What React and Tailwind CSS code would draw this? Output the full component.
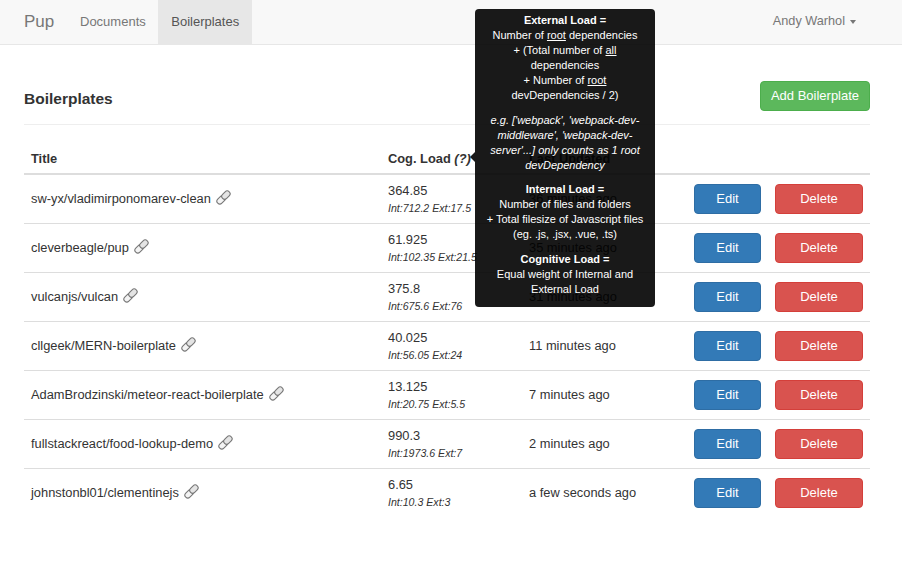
const rows = [
  { title: 'sw-yx/vladimirponomarev-clean', load: '364.85', detail: 'Int:712.2 Ext:17.5', updated: '36 minutes ago' },
  { title: 'cleverbeagle/pup', load: '61.925', detail: 'Int:102.35 Ext:21.5', updated: '35 minutes ago' },
  { title: 'vulcanjs/vulcan', load: '375.8', detail: 'Int:675.6 Ext:76', updated: '31 minutes ago' },
  { title: 'cllgeek/MERN-boilerplate', load: '40.025', detail: 'Int:56.05 Ext:24', updated: '11 minutes ago' },
  { title: 'AdamBrodzinski/meteor-react-boilerplate', load: '13.125', detail: 'Int:20.75 Ext:5.5', updated: '7 minutes ago' },
  { title: 'fullstackreact/food-lookup-demo', load: '990.3', detail: 'Int:1973.6 Ext:7', updated: '2 minutes ago' },
  { title: 'johnstonbl01/clementinejs', load: '6.65', detail: 'Int:10.3 Ext:3', updated: 'a few seconds ago' },
];

function LinkIcon() {
  return (
    <svg width="17" height="17" viewBox="0 0 17 17" fill="none" className="ml-[4px] inline-block align-[-3px]">
      <g transform="rotate(-45 8.5 8.5)" stroke="#777" strokeWidth="1.1">
        <rect x="0.4" y="5.6" width="9.4" height="5.8" rx="2.9" fill="#f4f4f4" />
        <rect x="7.2" y="5.6" width="9.4" height="5.8" rx="2.9" fill="#e4e4e4" />
      </g>
    </svg>
  );
}

function LoadTooltip() {
  return (
    <div className="absolute left-[475px] top-[9px] h-[298px] w-[180px] rounded-[4px] bg-black/90 px-[8px] pt-[4px] text-center text-[11px] leading-[15px] text-white">
      <div className="absolute left-[-5px] top-[143px] h-0 w-0 border-y-[5px] border-r-[5px] border-y-transparent border-r-black/90" />
      <p className="font-bold">External Load =</p>
      <p>
        Number of <u>root</u> dependencies
        <br />+ (Total number of <u>all</u>
        <br />dependencies
        <br />+ Number of <u>root</u>
        <br />devDependencies / 2)
      </p>
      <p className="mt-[9.5px] italic">
        e.g. ['webpack', 'webpack-dev-
        <br />middleware', 'webpack-dev-
        <br />server'...] only counts as 1 root
        <br />devDependency
      </p>
      <p className="mt-[9px] font-bold">Internal Load =</p>
      <p>
        Number of files and folders
        <br />+ Total filesize of Javascript files
        <br />(eg. .js, .jsx, .vue, .ts)
      </p>
      <p className="mt-[10px] font-bold">Cognitive Load =</p>
      <p>
        Equal weight of Internal and
        <br />External Load
      </p>
    </div>
  );
}

export default function App() {
  return (
    <div className="relative h-[582px] w-[902px] overflow-hidden bg-white font-['Liberation_Sans',Arial,sans-serif] text-[13px] text-[#333]">
      <nav className="flex h-[45px] items-stretch border-b border-[#e7e7e7] bg-[#f8f8f8] pl-[24px] pr-[46px] text-[#777]">
        <a className="flex w-[43px] items-center text-[17px]">Pup</a>
        <a className="flex items-center pl-[13px] pr-[12.5px]">Documents</a>
        <a className="flex items-center bg-[#e7e7e7] px-[13px] text-[#555]">Boilerplates</a>
        <a className="ml-auto flex items-center text-[12.7px]">
          Andy Warhol
          <span className="ml-[5px] h-0 w-0 border-x-[3.5px] border-t-[4px] border-x-transparent border-t-[#777]" />
        </a>
      </nav>

      <main className="pl-[24px] pr-[32px] pt-[36px]">
        <div className="flex h-[44px] items-start justify-between border-b border-[#eee]">
          <h4 className="mt-[8px] text-[15.5px] leading-[19px] font-bold text-[#333]">Boilerplates</h4>
          <button className="h-[30px] w-[110px] rounded-[4px] border border-[#4cae4c] bg-[#5cb85c] text-[13px] text-white">
            Add Boilerplate
          </button>
        </div>

        <table className="mt-[19px] w-[846px] table-fixed border-collapse text-[12.85px]">
          <colgroup>
            <col className="w-[357px]" />
            <col className="w-[141px]" />
            <col className="w-[165px]" />
            <col className="w-[183px]" />
          </colgroup>
          <thead>
            <tr className="h-[30px] border-b-2 border-[#ddd] text-left">
              <th className="px-[7px] pb-[5px] align-bottom font-bold">Title</th>
              <th className="px-[7px] pb-[5px] align-bottom font-bold">
                Cog. Load <em>(?)</em>
              </th>
              <th className="px-[7px] pb-[5px] align-bottom font-bold">Last Updated</th>
              <th />
            </tr>
          </thead>
          <tbody>
            {rows.map((r, i) => (
              <tr key={r.title} className={i < rows.length - 1 ? 'h-[49px] border-b border-[#ddd]' : 'h-[49px]'}>
                <td className="px-[7px] whitespace-nowrap">
                  {r.title}
                  <LinkIcon />
                </td>
                <td className="px-[7px] whitespace-nowrap">
                  <div className="leading-[18px]">{r.load}</div>
                  <div className="text-[10.6px] leading-[16px] italic">{r.detail}</div>
                </td>
                <td className="px-[7px]">{r.updated}</td>
                <td className="px-[7px]">
                  <div className="flex gap-[14px] text-[13px]">
                    <button className="h-[30px] w-[67px] rounded-[4px] border border-[#2e6da4] bg-[#337ab7] text-white">Edit</button>
                    <button className="h-[30px] w-[88px] rounded-[4px] border border-[#d43f3a] bg-[#d9534f] text-white">Delete</button>
                  </div>
                </td>
              </tr>
            ))}
          </tbody>
        </table>
      </main>

      <LoadTooltip />
    </div>
  );
}
